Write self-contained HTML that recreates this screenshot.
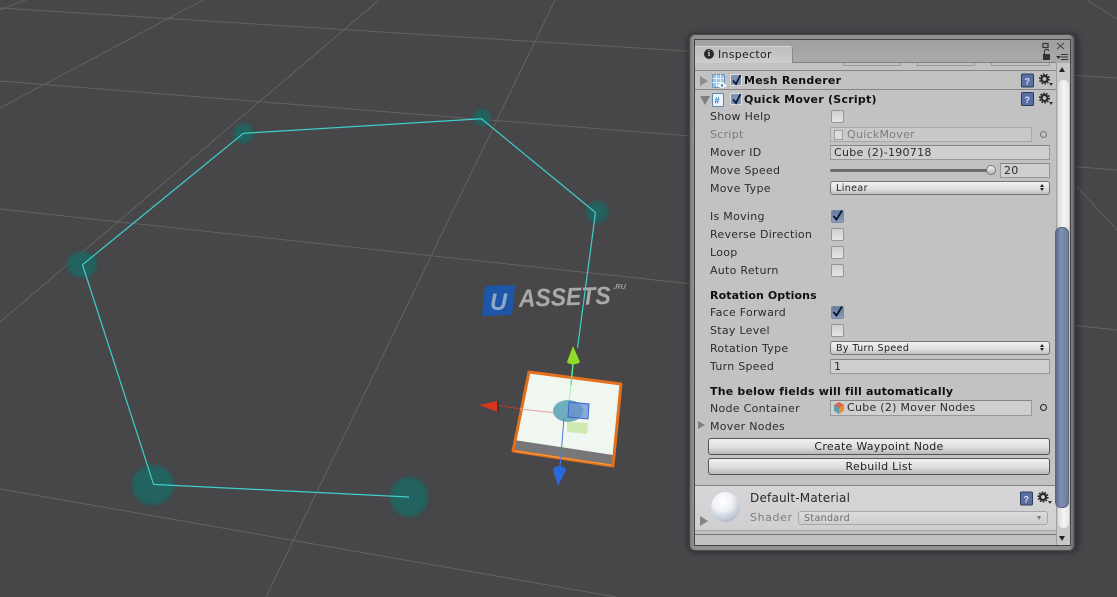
<!DOCTYPE html>
<html><head><meta charset="utf-8"><style>
html,body{margin:0;padding:0;background:#474649}
#r{position:relative;width:1117px;height:597px;overflow:hidden;background:#474649;font-family:"DejaVu Sans","Liberation Sans",sans-serif;font-size:11px;color:#1e1e1e}
#r svg.s{position:absolute;left:0;top:0;filter:blur(.35px)}
.a{position:absolute}
.t{position:absolute;white-space:nowrap;line-height:14px;height:14px;margin-top:1px;letter-spacing:.28px;color:#2c2c2c}
.b{font-weight:bold;color:#111}
.cb{position:absolute;left:831px;width:11px;height:11px;border:1px solid #969696;border-radius:2px;background:linear-gradient(#cfcfcf,#e6e6e6)}
.cb.on{background:linear-gradient(#66799a,#8e9fb8);border-color:#7a8aa0}
.cb svg{position:absolute;left:-1px;top:-2px}
.f{position:absolute;box-sizing:border-box;border:1px solid #999;border-top-color:#858585;background:#cfcfcf;color:#2c2c2c;line-height:14px;padding-left:3px;white-space:nowrap;letter-spacing:.28px}
.dd{position:absolute;left:830px;width:220px;height:14px;box-sizing:border-box;border:1px solid #777;border-radius:3px;background:linear-gradient(#f2f2f2,#dedede 60%,#c0c0c0);font-size:9.5px;line-height:13px;padding-left:5px;letter-spacing:.4px;color:#222}
.dd i{position:absolute;right:5px;width:0;height:0;border-left:2px solid transparent;border-right:2px solid transparent}
.dd i.u{top:2px;border-bottom:3px solid #222}
.dd i.d{top:6px;border-top:3px solid #222}
.btn{position:absolute;left:708px;width:342px;height:17px;box-sizing:border-box;border:1px solid #555;border-radius:3px;background:linear-gradient(#f0f0f0,#dedede 55%,#b8b8b8);text-align:center;line-height:16px;letter-spacing:.27px;color:#222}
</style></head><body><div id="r">
<svg class="s" width="1117" height="597" viewBox="0 0 1117 597">
<defs>
<filter id="bl" x="-30%" y="-30%" width="160%" height="160%"><feGaussianBlur stdDeviation="1.500"/></filter>
<filter id="sh" x="-10%" y="-10%" width="120%" height="120%"><feGaussianBlur stdDeviation="3"/></filter>
</defs>
<g stroke="#646466" stroke-width=".9" fill="none">
<path d="M0 8L1117 78M0 81L1117 170M0 209L1117 330M0 489L616 597"/>
<path d="M555 0L266 597M379 0L0 322M203 0L0 108M26 0L0 10M1087 0L1117 19M1077 187L1117 230"/>
</g>
<g fill="#22625f" filter="url(#bl)">
<ellipse cx="243.500" cy="133.500" rx="10" ry="10"/>
<ellipse cx="482" cy="117.500" rx="9" ry="8.500"/>
<ellipse cx="597" cy="212" rx="11" ry="11"/>
<ellipse cx="82" cy="264.500" rx="15" ry="13"/>
<ellipse cx="153" cy="485" rx="21" ry="20"/>
<ellipse cx="409" cy="497" rx="19" ry="20"/>
</g>
<path d="M595.500 212.500L481.500 118.800L243.400 133.300L82.500 264.700L153.600 484.400L409 497" fill="none" stroke="#3fcfcc" stroke-width="1.200"/>
<!-- watermark -->
<path d="M485 286L515 285L512 315L482 316Z" fill="#1d56a8"/>
<text x="490" y="310" font-family="Liberation Sans" font-weight="bold" font-style="italic" font-size="24" fill="#8ea9c8" textLength="17" lengthAdjust="spacingAndGlyphs">U</text>
<text x="519" y="307" font-family="Liberation Sans" font-weight="bold" font-style="italic" font-size="25" fill="#a9a9ab" transform="rotate(-2 519 306)" textLength="92" lengthAdjust="spacingAndGlyphs">ASSETS</text>
<text x="613" y="289" font-family="Liberation Sans" font-weight="bold" font-style="italic" font-size="7.500" fill="#9a9a9c">.RU</text>
<path d="M595.500 212.500L577.500 348" stroke="#3fcfcc" stroke-width="1.200" fill="none"/>
<!-- cube -->
<path d="M529 372L621 384L613 466L513 451Z" fill="#f0f6f0"/>
<path d="M514 440L613 455L613 466L513 451Z" fill="#77777a"/>
<path d="M529 372L621 384L613 466L513 451Z" fill="none" stroke="#e2701c" stroke-width="3" stroke-linejoin="round"/>
<path d="M515 451L611 465" stroke="#f5a040" stroke-width="1"/>
<path d="M567 422L588 423L587 434L567 432Z" fill="#cfeab0"/>
<path d="M520 409L566 414" stroke="#e0a0a0" stroke-width="1"/>
<path d="M497 405L520 409" stroke="#b04030" stroke-width="1"/>
<path d="M573 364L571 385" stroke="#5fe08a" stroke-width="1.500"/>
<path d="M571 385L569 402" stroke="#a8ecb0" stroke-width="1"/>
<ellipse cx="568" cy="411" rx="15" ry="11" fill="#6fafbc"/>
<path d="M569 402L589 404L588 419L568 417Z" fill="#6a90d0" fill-opacity=".75" stroke="#3a62d4" stroke-width="1"/>
<path d="M564 418L560 467" stroke="#4a7ae0" stroke-width="1"/>
<path d="M573 346L567 362C568 365 578 365 580 362Z" fill="#8edc26"/>
<path d="M558 486L553 470C554 465 565 465 566 470Z" fill="#2a68e0"/>
<path d="M479 405L498 401L498 412Z" fill="#d8341e"/>
<path d="M498 401V412" stroke="#222" stroke-width="1"/>
<!-- panel shadow -->
<rect x="687" y="33" width="392" height="520" rx="8" fill="#000" opacity=".3" filter="url(#sh)"/>
</svg>
<div class="a" style="left:689px;top:34px;width:386px;height:517px;box-sizing:border-box;border-radius:6px;background:linear-gradient(90deg,#77777a,#909092 3px,#909092 380px,#5f6068);border:1px solid #4a4a4c"></div>
<div class="a" style="left:694px;top:39px;width:377px;height:507px;box-sizing:border-box;border:1px solid #444;background:#c2c2c2"></div>
<!-- tab bar -->
<div class="a" style="left:695px;top:40px;width:375px;height:23px;background:linear-gradient(#a0a0a0,#aaaaaa)"></div>
<div class="a" style="left:695px;top:62px;width:361px;height:1px;background:#808080"></div>
<div class="a" style="left:695px;top:46px;width:98px;height:17px;background:linear-gradient(#bdbdbd,#cecece);border-top:1px solid #d8d8d8;border-right:1px solid #888;box-sizing:border-box;border-radius:0 3px 0 0"></div>
<div class="a" style="left:704px;top:49px;width:10px;height:10px;border-radius:50%;background:#2c2c2c;color:#ddd;font:bold 8px/10px 'Liberation Serif',serif;text-align:center">i</div>
<div class="t" style="left:718px;top:47px;color:#222">Inspector</div>
<svg class="a" style="left:1030px;top:40px" width="42" height="24" viewBox="0 0 42 24"><rect x="13" y="3.500" width="5" height="4" fill="none" stroke="#333" stroke-width="1.200"/><path d="M27 3L34 9M34 3L27 9" stroke="#444" stroke-width="1"/><rect x="13" y="14" width="7" height="6" fill="#333"/><path d="M14.500 14V11.500A2.300 2.300 0 0 1 19 11" fill="none" stroke="#333"/><path d="M26 16h5l-2.500 3z" fill="#333"/><path d="M31 14.500h7M31 17h7M31 19.500h7" stroke="#333"/></svg>
<!-- previous component remains -->
<div class="a" style="left:843px;top:63px;width:58px;height:3px;border:1px solid #999;border-top:0;box-sizing:border-box"></div>
<div class="a" style="left:917px;top:63px;width:58px;height:3px;border:1px solid #999;border-top:0;box-sizing:border-box"></div>
<div class="a" style="left:991px;top:63px;width:59px;height:3px;border:1px solid #999;border-top:0;box-sizing:border-box"></div>
<div class="a" style="left:695px;top:70px;width:361px;height:1px;background:#868686"></div>
<div class="a" style="left:695px;top:89px;width:361px;height:1px;background:#868686"></div>
<!-- arrows and icons -->
<svg class="a" style="left:695px;top:70px" width="60" height="40" viewBox="0 0 60 40">
<path d="M5 6L13 11L5 16Z" fill="#8c8c8c"/><path d="M5 26L15 26L10 35Z" fill="#7f7f7f"/>
<rect x="17.500" y="4.500" width="12" height="13" rx="1" fill="#9fc4e6" stroke="#6a96c0"/><path d="M21.500 4.500V17M25.500 4.500V17M17.500 8.500H29M17.500 12.500H29" stroke="#e6f0fa"/><ellipse cx="27" cy="15.500" rx="4.500" ry="2.500" fill="#f2f6fa"/><circle cx="27" cy="15.500" r="1.200" fill="#4a7ea8"/>
<rect x="17.500" y="23.500" width="11" height="13" rx="1" fill="#eef4fa" stroke="#5a86b0"/><text x="19.500" y="33.500" font-size="9" font-weight="bold" fill="#2a7aa8" font-family="Liberation Sans">#</text>
<rect x="35.500" y="4.500" width="11" height="11" rx="1.500" fill="#7f92b0" stroke="#e0e0e0"/><path d="M38 10.500L41 14L45.500 5" fill="none" stroke="#0e1a40" stroke-width="1.800"/>
<rect x="35.500" y="23.500" width="11" height="11" rx="1.500" fill="#7f92b0" stroke="#e0e0e0"/><path d="M38 29.500L41 33L45.500 24" fill="none" stroke="#0e1a40" stroke-width="1.800"/>
</svg>
<div class="t b" style="left:744px;top:73px;letter-spacing:.25px">Mesh Renderer</div>
<div class="t b" style="left:744px;top:92px;letter-spacing:.25px">Quick Mover (Script)</div>
<svg class="a" style="left:1018px;top:70px" width="38" height="40" viewBox="0 0 38 40">
<rect x="3.500" y="4" width="12" height="13" rx="1" fill="#5a6fa4" stroke="#2e3c58"/><text x="6.500" y="14.500" font-size="9" fill="#d8e2f2" font-family="Liberation Sans" font-weight="bold">?</text>
<rect x="3.500" y="22.500" width="12" height="13" rx="1" fill="#5a6fa4" stroke="#2e3c58"/><text x="6.500" y="33" font-size="9" fill="#d8e2f2" font-family="Liberation Sans" font-weight="bold">?</text>
<circle cx="26.500" cy="9" r="3" fill="none" stroke="#2a2a2a" stroke-width="2.200"/><circle cx="26.500" cy="9" r="4.800" fill="none" stroke="#2a2a2a" stroke-width="1.500" stroke-dasharray="1.700 1.300"/><path d="M31 13h4l-2 3z" fill="#333"/>
<circle cx="26.500" cy="28" r="3" fill="none" stroke="#2a2a2a" stroke-width="2.200"/><circle cx="26.500" cy="28" r="4.800" fill="none" stroke="#2a2a2a" stroke-width="1.500" stroke-dasharray="1.700 1.300"/><path d="M31 32h4l-2 3z" fill="#333"/>
</svg>
<!-- rows -->
<div class="t" style="left:710px;top:109px">Show Help</div><div class="cb" style="top:110px"></div>
<div class="t" style="left:710px;top:127px;color:#7c7c7c">Script</div>
<div class="f" style="left:830px;top:127px;width:202px;height:15px;background:#c9c9c9;border-color:#a8a8a8;color:#7c7c7c;padding-left:16px">QuickMover</div>
<div class="a" style="left:834px;top:130px;width:9px;height:10px;background:#dcdcdc;border:1px solid #a0a0a0;box-sizing:border-box"></div>
<div class="a" style="left:1040px;top:131px;width:7px;height:7px;border:1px solid #777;border-radius:50%;box-sizing:border-box"></div>
<div class="t" style="left:710px;top:145px">Mover ID</div>
<div class="f" style="left:830px;top:145px;width:220px;height:15px">Cube (2)-190718</div>
<div class="t" style="left:710px;top:163px">Move Speed</div>
<div class="a" style="left:830px;top:169px;width:160px;height:3px;border-radius:2px;background:#6c6c6c"></div>
<div class="a" style="left:986px;top:165px;width:10px;height:10px;border-radius:50%;background:linear-gradient(#f2f2f2,#b8b8b8);border:1px solid #777;box-sizing:border-box"></div>
<div class="f" style="left:1000px;top:163px;width:50px;height:15px">20</div>
<div class="t" style="left:710px;top:181px">Move Type</div>
<div class="dd" style="top:181px">Linear<i class="u"></i><i class="d"></i></div>
<div class="t" style="left:710px;top:209px">Is Moving</div><div class="cb on" style="top:210px"><svg width="13" height="13" viewBox="0 0 13 13"><path d="M2.500 7L5.500 10.500L11 1.500" fill="none" stroke="#0c1638" stroke-width="1.900"/></svg></div>
<div class="t" style="left:710px;top:227px">Reverse Direction</div><div class="cb" style="top:228px"></div>
<div class="t" style="left:710px;top:245px">Loop</div><div class="cb" style="top:246px"></div>
<div class="t" style="left:710px;top:263px">Auto Return</div><div class="cb" style="top:264px"></div>
<div class="t b" style="left:710px;top:288px;letter-spacing:.1px">Rotation Options</div>
<div class="t" style="left:710px;top:305px">Face Forward</div><div class="cb on" style="top:306px"><svg width="13" height="13" viewBox="0 0 13 13"><path d="M2.500 7L5.500 10.500L11 1.500" fill="none" stroke="#0c1638" stroke-width="1.900"/></svg></div>
<div class="t" style="left:710px;top:323px">Stay Level</div><div class="cb" style="top:324px"></div>
<div class="t" style="left:710px;top:341px">Rotation Type</div>
<div class="dd" style="top:341px">By Turn Speed<i class="u"></i><i class="d"></i></div>
<div class="t" style="left:710px;top:359px">Turn Speed</div>
<div class="f" style="left:830px;top:359px;width:220px;height:15px">1</div>
<div class="t b" style="left:710px;top:384px;letter-spacing:.2px">The below fields will fill automatically</div>
<div class="t" style="left:710px;top:401px">Node Container</div>
<div class="f" style="left:830px;top:400px;width:202px;height:16px;padding-left:16px">Cube (2) Mover Nodes</div>
<svg class="a" style="left:833px;top:402px" width="12" height="12" viewBox="0 0 12 12"><path d="M6 0L11 3V9L6 12Z" fill="#e8902c"/><path d="M6 0L1 3V9L6 12Z" fill="#5aa0b4"/><path d="M1 3L6 0L11 3L6 6Z" fill="#d86a50"/></svg>
<div class="a" style="left:1040px;top:404px;width:7px;height:7px;border:1px solid #222;border-radius:50%;box-sizing:border-box"></div>
<div class="a" style="left:698px;top:421px;width:0;height:0;border-left:7px solid #808080;border-top:4px solid transparent;border-bottom:4px solid transparent"></div>
<div class="t" style="left:710px;top:419px">Mover Nodes</div>
<div class="btn" style="top:438px">Create Waypoint Node</div>
<div class="btn" style="top:458px">Rebuild List</div>
<!-- material -->
<div class="a" style="left:695px;top:485px;width:361px;height:1px;background:#808080"></div>
<div class="a" style="left:695px;top:486px;width:361px;height:44px;background:linear-gradient(#d6d6d8,#d0d0d2)"></div>
<div class="a" style="left:695px;top:530px;width:361px;height:4px;background:#c0c0c0;border-top:1px solid #a8a8a8;box-sizing:border-box"></div>
<div class="a" style="left:695px;top:534px;width:375px;height:1px;background:#757575"></div>
<div class="a" style="left:695px;top:535px;width:375px;height:10px;background:#c2c2c2"></div>
<div class="a" style="left:711px;top:492px;width:29px;height:30px;border-radius:50%;background:radial-gradient(circle at 40% 30%,#fff 0,#f0f2f6 35%,#a8b4c4 85%,#8a98a8)"></div>
<div class="a" style="left:700px;top:516px;width:0;height:0;border-left:8px solid #858585;border-top:5px solid transparent;border-bottom:5px solid transparent"></div>
<div class="t" style="left:750px;top:490px;font-size:12px;letter-spacing:.2px;color:#2a2a2a">Default-Material</div>
<div class="t" style="left:750px;top:510px;color:#7e7e7e;letter-spacing:.6px">Shader</div>
<div class="a" style="left:798px;top:511px;width:250px;height:14px;box-sizing:border-box;border:1px solid #a8a8a8;border-radius:3px;background:linear-gradient(#dcdcdc,#cecece);font-size:9.500px;line-height:13px;padding-left:5px;letter-spacing:.35px;color:#6c6c6c">Standard</div>
<div class="a" style="left:1037px;top:516px;width:0;height:0;border-top:4px solid #777;border-left:2px solid transparent;border-right:2px solid transparent"></div>
<svg class="a" style="left:1016px;top:488px" width="40" height="22" viewBox="0 0 40 22"><rect x="4.500" y="4" width="12" height="13" rx="1" fill="#5a6fa4" stroke="#2e3c58"/><text x="7.500" y="14.500" font-size="9" fill="#d8e2f2" font-family="Liberation Sans" font-weight="bold">?</text><circle cx="27" cy="9" r="3" fill="none" stroke="#2a2a2a" stroke-width="2.200"/><circle cx="27" cy="9" r="4.800" fill="none" stroke="#2a2a2a" stroke-width="1.500" stroke-dasharray="1.700 1.300"/><path d="M32 13h4l-2 3z" fill="#333"/></svg>
<!-- scrollbar -->
<div class="a" style="left:1056px;top:63px;width:14px;height:482px;background:#c8c8c8;border-left:1px solid #a0a0a0;box-sizing:border-box"></div>
<div class="a" style="left:1058px;top:80px;width:11px;height:448px;border-radius:6px;background:linear-gradient(90deg,#dcdcdc,#f4f4f4 50%,#e6e6e6)"></div>
<div class="a" style="left:1055px;top:227px;width:14px;height:281px;border-radius:6px;background:linear-gradient(90deg,#5c6c90,#8090b0 40%,#6c7c9c);border:1px solid #5a6784;box-sizing:border-box"></div>
<div class="a" style="left:1059px;top:67px;width:0;height:0;border-bottom:5px solid #222;border-left:3.500px solid transparent;border-right:3.500px solid transparent"></div>
<div class="a" style="left:1059px;top:536px;width:0;height:0;border-top:5px solid #222;border-left:3.500px solid transparent;border-right:3.500px solid transparent"></div>
</div></body></html>
